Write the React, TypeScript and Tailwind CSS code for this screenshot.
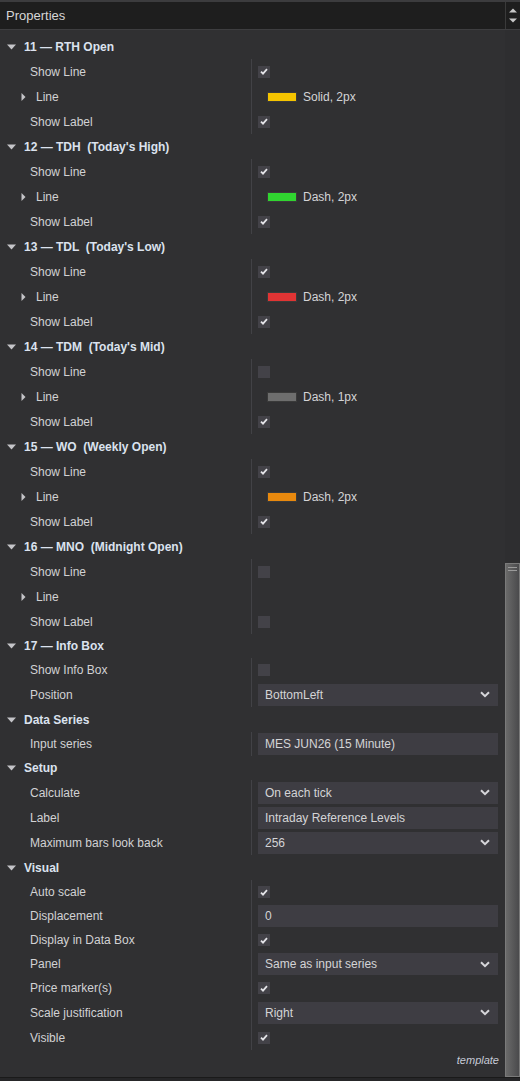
import React from "react";

type Row =
  | { kind: "header"; text: string; h: number }
  | { kind: "check"; label: string; checked: boolean; h: number }
  | { kind: "line"; swatch?: string; text?: string; h: number }
  | { kind: "select"; label: string; value: string; h: number }
  | { kind: "input"; label: string; value: string; h: number };

const lineSections: { title: string; show: boolean; swatch?: string; text?: string; label: boolean }[] = [
  { title: "11 — RTH Open", show: true, swatch: "#f5c400", text: "Solid, 2px", label: true },
  { title: "12 — TDH  (Today's High)", show: true, swatch: "#30d530", text: "Dash, 2px", label: true },
  { title: "13 — TDL  (Today's Low)", show: true, swatch: "#e03434", text: "Dash, 2px", label: true },
  { title: "14 — TDM  (Today's Mid)", show: false, swatch: "#6e6e6e", text: "Dash, 1px", label: true },
  { title: "15 — WO  (Weekly Open)", show: true, swatch: "#e8890e", text: "Dash, 2px", label: true },
  { title: "16 — MNO  (Midnight Open)", show: false, label: false },
];

const rows: Row[] = [];
lineSections.forEach((s) => {
  rows.push({ kind: "header", text: s.title, h: 25 });
  rows.push({ kind: "check", label: "Show Line", checked: s.show, h: 25 });
  rows.push({ kind: "line", swatch: s.swatch, text: s.text, h: 25 });
  rows.push({ kind: "check", label: "Show Label", checked: s.label, h: 25 });
});
rows.push(
  { kind: "header", text: "17 — Info Box", h: 24 },
  { kind: "check", label: "Show Info Box", checked: false, h: 24 },
  { kind: "select", label: "Position", value: "BottomLeft", h: 25 },
  { kind: "header", text: "Data Series", h: 25 },
  { kind: "input", label: "Input series", value: "MES JUN26 (15 Minute)", h: 24 },
  { kind: "header", text: "Setup", h: 24 },
  { kind: "select", label: "Calculate", value: "On each tick", h: 25 },
  { kind: "input", label: "Label", value: "Intraday Reference Levels", h: 25 },
  { kind: "select", label: "Maximum bars look back", value: "256", h: 25 },
  { kind: "header", text: "Visual", h: 25 },
  { kind: "check", label: "Auto scale", checked: true, h: 24 },
  { kind: "input", label: "Displacement", value: "0", h: 24 },
  { kind: "check", label: "Display in Data Box", checked: true, h: 24 },
  { kind: "select", label: "Panel", value: "Same as input series", h: 24 },
  { kind: "check", label: "Price marker(s)", checked: true, h: 24 },
  { kind: "select", label: "Scale justification", value: "Right", h: 25 },
  { kind: "check", label: "Visible", checked: true, h: 25 }
);

function DownTri() {
  return (
    <svg width="9" height="6" viewBox="0 0 9 6" className="shrink-0">
      <path d="M0 0.5 L9 0.5 L4.5 5.5 Z" fill="#c4c4c8" />
    </svg>
  );
}

function RightTri() {
  return (
    <svg width="5" height="8" viewBox="0 0 5 8" className="shrink-0">
      <path d="M0.5 0 L4.5 4 L0.5 8 Z" fill="#c4c4c8" />
    </svg>
  );
}

function Check({ checked }: { checked: boolean }) {
  return (
    <div className="w-[12px] h-[12px] bg-[#434248] flex items-center justify-center">
      {checked && (
        <svg width="8" height="7" viewBox="0 0 8 7">
          <path d="M1 3.6 L3 5.6 L7 1.2" stroke="#e4e4e8" strokeWidth="1.8" fill="none" />
        </svg>
      )}
    </div>
  );
}

function Chevron() {
  return (
    <svg width="10" height="7" viewBox="0 0 10 7" className="shrink-0">
      <path d="M1 1.2 L5 5.2 L9 1.2" stroke="#d6d6da" strokeWidth="2" fill="none" />
    </svg>
  );
}

function Field({ value, select }: { value: string; select: boolean }) {
  return (
    <div className="w-[240px] h-[22px] bg-[#3e3d43] flex items-center pl-[7px] pr-[8px] text-[12px] text-[#d4d4d6]">
      <span className="flex-1">{value}</span>
      {select && <Chevron />}
    </div>
  );
}

function SubRow({ label, h, children, lineRow }: { label: string; h: number; children?: React.ReactNode; lineRow?: boolean }) {
  return (
    <div className="flex" style={{ height: h }}>
      <div className={`w-[251px] flex items-center ${lineRow ? "pl-[21px]" : "pl-[30px]"} text-[12px] text-[#d2d2d4]`}>
        {lineRow && (
          <span className="mr-[10px] flex items-center">
            <RightTri />
          </span>
        )}
        {label}
      </div>
      <div className="flex-1 border-l border-[#424246] flex items-center pl-[6px]">{children}</div>
    </div>
  );
}

export default function App() {
  return (
    <div className="w-[520px] h-[1081px] bg-[#303032] flex flex-col overflow-hidden font-['Liberation_Sans',Arial,sans-serif]">
      <div className="h-[2px] bg-[#3c3c3e]" />
      <div className="h-[27px] bg-[#1e1e1e] flex">
        <div className="flex-1 flex items-center pl-[6px] text-[13px] text-[#d6d6d6]">Properties</div>
        <div className="w-[15px] border-l border-[#3a3a3a] flex flex-col items-center justify-between py-[6px]">
          <svg width="8" height="5" viewBox="0 0 8 5">
            <path d="M0 4.5 L8 4.5 L4 0.5 Z" fill="#c8c8c8" />
          </svg>
          <svg width="8" height="5" viewBox="0 0 8 5">
            <path d="M0 0.5 L8 0.5 L4 4.5 Z" fill="#c8c8c8" />
          </svg>
        </div>
      </div>
      <div className="h-px bg-[#3e3e40]" />
      <div className="flex-1 flex">
        <div className="flex-1 flex flex-col pt-[4px]">
          {rows.map((r, i) => {
            if (r.kind === "header")
              return (
                <div key={i} className="flex items-center pl-[7px]" style={{ height: r.h }}>
                  <DownTri />
                  <span className="ml-[8px] text-[12px] font-bold text-[#dbe2ee] whitespace-pre">{r.text}</span>
                </div>
              );
            if (r.kind === "check")
              return (
                <SubRow key={i} label={r.label} h={r.h}>
                  <Check checked={r.checked} />
                </SubRow>
              );
            if (r.kind === "line")
              return (
                <SubRow key={i} label="Line" h={r.h} lineRow>
                  {r.swatch && (
                    <div className="flex items-center ml-[9px]">
                      <div className="w-[30px] h-[10px] border border-[#3a3a3a]" style={{ background: r.swatch }} />
                      <span className="ml-[6px] text-[12px] text-[#d4d4d6]">{r.text}</span>
                    </div>
                  )}
                </SubRow>
              );
            return (
              <SubRow key={i} label={r.label} h={r.h}>
                <Field value={r.value} select={r.kind === "select"} />
              </SubRow>
            );
          })}
          <div className="flex-1 flex items-end justify-end pr-[6px] pb-[9px]">
            <span className="italic text-[11px] text-[#c6cad6]">template</span>
          </div>
        </div>
        <div className="w-[15px] flex flex-col bg-[#2e2e30]">
          <div className="h-[533px]" />
          <div className="flex-1 border border-[#7a7a7a] bg-gradient-to-r from-[#6a6a6a] to-[#4a4a4c] flex flex-col items-center pt-[3px] gap-[2px]">
            <div className="w-[9px] h-px bg-[#9a9a9a]" />
            <div className="w-[9px] h-px bg-[#9a9a9a]" />
          </div>
        </div>
      </div>
      <div className="h-[4px] bg-[#262628] border-t border-[#1a1a1a]" />
    </div>
  );
}
